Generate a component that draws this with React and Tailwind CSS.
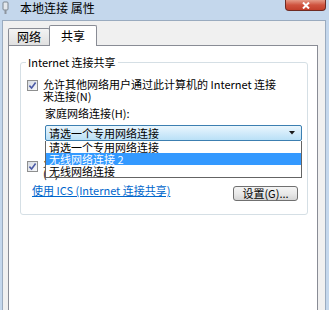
import React from "react";

function Checkbox() {
  return (
    <span className="flex h-[11px] w-[11px] shrink-0 items-center justify-center border border-[#8e8f8f] bg-linear-to-br from-[#d6dbe2] to-[#f8f9fb]">
      <svg width="9" height="9" viewBox="0 0 9 9">
        <path d="M1.4 4.6 L3.6 7 L7.6 1.6" fill="none" stroke="#4b5aa6" strokeWidth="1.6" />
      </svg>
    </span>
  );
}

function App() {
  return (
    <div className="h-[310px] w-[329px] overflow-hidden bg-[#c4d7ec] font-['Noto_Sans_CJK_SC',sans-serif] text-[11px] text-black">
      {/* Title bar */}
      <div className="flex h-[20px] items-start">
        <div className="flex h-[16px] items-center pl-[2px]">
          <svg width="7" height="14" viewBox="0 0 7 14">
            <rect x="1" y="1" width="5" height="8" rx="1" fill="#e4e8ec" stroke="#7d8791" />
            <rect x="2.5" y="9" width="2" height="4" fill="#8d969f" />
          </svg>
          <span className="ml-[11px] text-[12px] leading-[16px]">本地连接 属性</span>
        </div>
        <div className="ml-auto mr-[3px] flex h-[11px] w-[41px] items-center justify-center rounded-b-[4px] border border-t-0 border-[#6e2a22] bg-linear-to-b from-[#e49a88] via-[#cf533f] to-[#c23f2b]">
          <svg width="8" height="7" viewBox="0 0 8 7">
            <path d="M1 0.5 L7 6.5 M7 0.5 L1 6.5" stroke="#ffffff" strokeWidth="2" />
          </svg>
        </div>
      </div>

      {/* Client area */}
      <div className="ml-[2px] h-[290px] w-[324px] border border-b-0 border-[#9aabbf] bg-[#f0f0f0]">
        {/* Tabs */}
        <div className="flex items-end pl-[5px] pt-[4px]">
          <div className="mb-[1px] flex h-[17px] w-[42px] items-center justify-center rounded-t-[2px] border border-b-0 border-[#898c95] bg-linear-to-b from-[#f3f3f3] to-[#e0e0e0] text-[12px]">
            网络
          </div>
          <div className="relative z-10 -ml-[1px] flex h-[21px] w-[48px] items-center justify-center rounded-t-[2px] border border-b-0 border-[#898c95] bg-white text-[12px]">
            共享
          </div>
        </div>

        {/* Tab panel */}
        <div className="-mt-[1px] ml-[5px] h-[265px] w-[310px] border border-b-0 border-[#898c95] bg-white">
          <fieldset className="ml-[11px] mt-[10px] w-[288px] rounded-[3px] border border-[#d5dfe5]">
            <legend className="ml-[5px] px-[2px] leading-[13px]">Internet 连接共享</legend>
            <div className="pb-[13px] pt-[9px]">
              <div className="flex pl-[6px]">
                <span className="mt-[2px]">
                  <Checkbox />
                </span>
                <span className="ml-[5px] whitespace-nowrap leading-[12px]">
                  允许其他网络用户通过此计算机的 Internet 连接
                  <br />
                  来连接(N)
                </span>
              </div>

              <div className="mt-[5px] pl-[24px] leading-[12px]">家庭网络连接(H):</div>

              <div className="relative ml-[24px] mt-[6px] flex h-[16px] w-[257px] items-center rounded-[2px] border border-[#3c7fb1] bg-linear-to-b from-[#eaf6fd] to-[#b9e0f7] pl-[3px] pr-[6px]">
                <span className="leading-[14px]">请选一个专用网络连接</span>
                <svg className="ml-auto" width="6" height="4" viewBox="0 0 6 4">
                  <path d="M0 0 L6 0 L3 3.5 Z" fill="#1a1a1a" />
                </svg>
                {/* Open list */}
                <div className="absolute left-[-1px] top-[15px] z-10 w-[257px] border border-t-0 border-[#646464] bg-white">
                  <div className="h-[12px] pl-[3px] leading-[12px]">请选一个专用网络连接</div>
                  <div className="h-[12px] bg-[#3399ff] pl-[3px] leading-[12px] text-white">无线网络连接 2</div>
                  <div className="h-[12px] pl-[3px] leading-[12px]">无线网络连接</div>
                </div>
              </div>

              <div className="mt-[16px] flex pl-[6px]">
                <span className="mt-[4px]">
                  <Checkbox />
                </span>
                <span className="ml-[5px] w-[245px] leading-[11px]">
                  允许其他网络用户控制或禁用共享的 Internet 连接(O)
                </span>
              </div>

              <div className="mt-[5px] flex items-start justify-between pl-[11px] pr-[9px]">
                <span className="leading-[12px] text-[#0066cc] underline">使用 ICS (Internet 连接共享)</span>
                <button className="mt-[2px] flex h-[15px] w-[65px] items-center justify-center rounded-[3px] border border-[#707070] bg-linear-to-b from-[#f4f4f4] via-[#e9e9e9] to-[#d5d5d5] leading-[13px]">
                  设置(G)...
                </button>
              </div>
            </div>
          </fieldset>
        </div>
      </div>
    </div>
  );
}

export default App;
